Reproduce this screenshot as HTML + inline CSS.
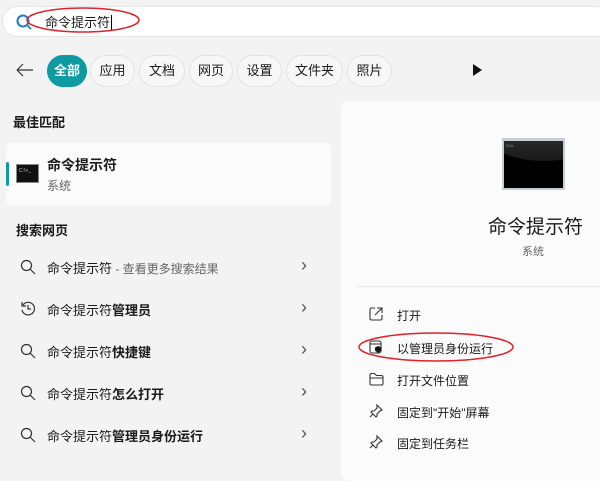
<!DOCTYPE html>
<html><head><meta charset="utf-8"><style>
*{margin:0;padding:0;box-sizing:border-box}
body{width:600px;height:463px;background:#f3f3f3;font-family:"Liberation Sans","Noto Sans CJK SC",sans-serif;position:relative;overflow:hidden;color:#1a1a1a}
.a{position:absolute}
.search{left:2px;top:6px;width:610px;height:31px;background:#fff;border:1px solid #e5e5e5;border-radius:16px}
.chip{top:55px;height:32px;border:1px solid #e3e3e3;border-radius:16px;background:#f7f7f7;font-size:13px;line-height:30px;text-align:center}
.h{font-size:13px;font-weight:bold}
.row{left:0;width:340px;height:40px;font-size:13px}
.row .t{position:absolute;left:47px;top:10px}
.row .chev{position:absolute;left:301px;top:7px;font-size:18px;color:#555}
.act{left:397px;font-size:12px}
</style></head><body>
<div class="a search"></div>
<svg class="a" style="left:15px;top:13px" width="18" height="18" viewBox="0 0 18 18"><circle cx="8" cy="8" r="5.5" fill="none" stroke="#1e7ad6" stroke-width="2"/><path d="M12 12l4 4" stroke="#1aa39a" stroke-width="2"/></svg>
<div class="a" style="left:45px;top:12px;font-size:13px">命令提示符<span style="border-left:1px solid #000;margin-left:1px"></span></div>
<svg class="a" style="left:25px;top:5px" width="118" height="30"><ellipse cx="58" cy="15" rx="56" ry="12" fill="none" stroke="#e0202a" stroke-width="1.5"/></svg>
<svg class="a" style="left:15px;top:62px" width="20" height="16"><path d="M2 8h16M2 8l6-6M2 8l6 6" fill="none" stroke="#333" stroke-width="1.2"/></svg>
<div class="a chip" style="left:47px;width:40px;background:#0e9aa2;border-color:#0e9aa2;color:#fff;font-weight:bold">全部</div>
<div class="a chip" style="left:90px;width:45px">应用</div>
<div class="a chip" style="left:139px;width:46px">文档</div>
<div class="a chip" style="left:189px;width:44px">网页</div>
<div class="a chip" style="left:237px;width:45px">设置</div>
<div class="a chip" style="left:286px;width:57px">文件夹</div>
<div class="a chip" style="left:347px;width:45px">照片</div>
<svg class="a" style="left:472px;top:63px" width="12" height="14"><path d="M1 1l9 6-9 6z" fill="#111"/></svg>
<div class="a h" style="left:13px;top:112px">最佳匹配</div>
<div class="a" style="left:6px;top:143px;width:325px;height:62px;background:#fbfbfb;border-radius:5px"></div>
<div class="a" style="left:6px;top:162px;width:3px;height:24px;background:#0e9aa2;border-radius:2px"></div>
<div class="a" style="left:16px;top:164px;width:23px;height:19px;background:#111;border:1px solid #888"><div style="color:#ccc;font-size:5px;margin:3px 0 0 2px">C:\&gt;_</div></div>
<div class="a h" style="left:47px;top:155px;font-size:14px">命令提示符</div>
<div class="a" style="left:47px;top:177px;font-size:12px;color:#666">系统</div>
<div class="a h" style="left:16px;top:220px">搜索网页</div>
<div class="a row" style="top:248px"><svg class="a" style="left:20px;top:11px" width="16" height="16"><circle cx="6.5" cy="6.5" r="5" fill="none" stroke="#333" stroke-width="1.2"/><path d="M10 10l5 5" stroke="#333" stroke-width="1.2"/></svg><span class="t">命令提示符<span style="color:#666;font-size:12px"> - 查看更多搜索结果</span></span><span class="chev">›</span></div>
<div class="a row" style="top:290px"><svg class="a" style="left:20px;top:11px" width="16" height="16"><path d="M3 4A6.3 6.3 0 1 1 2 9" fill="none" stroke="#333" stroke-width="1.2"/><path d="M2 1v4h4M8 4v4h3" fill="none" stroke="#333" stroke-width="1.2"/></svg><span class="t">命令提示符<b>管理员</b></span><span class="chev">›</span></div>
<div class="a row" style="top:332px"><svg class="a" style="left:20px;top:11px" width="16" height="16"><circle cx="6.5" cy="6.5" r="5" fill="none" stroke="#333" stroke-width="1.2"/><path d="M10 10l5 5" stroke="#333" stroke-width="1.2"/></svg><span class="t">命令提示符<b>快捷键</b></span><span class="chev">›</span></div>
<div class="a row" style="top:374px"><svg class="a" style="left:20px;top:11px" width="16" height="16"><circle cx="6.5" cy="6.5" r="5" fill="none" stroke="#333" stroke-width="1.2"/><path d="M10 10l5 5" stroke="#333" stroke-width="1.2"/></svg><span class="t">命令提示符<b>怎么打开</b></span><span class="chev">›</span></div>
<div class="a row" style="top:416px"><svg class="a" style="left:20px;top:11px" width="16" height="16"><circle cx="6.5" cy="6.5" r="5" fill="none" stroke="#333" stroke-width="1.2"/><path d="M10 10l5 5" stroke="#333" stroke-width="1.2"/></svg><span class="t">命令提示符<b>管理员身份运行</b></span><span class="chev">›</span></div>
<div class="a" style="left:341px;top:101px;width:270px;height:380px;background:#fbfbfb;border-radius:8px"></div>
<div class="a" style="left:502px;top:138px;width:63px;height:52px;background:#000;border:2px solid #c8ccd4;border-top-width:3px;overflow:hidden"><div style="position:absolute;left:-20px;top:-40px;width:120px;height:60px;border-radius:50%;background:linear-gradient(#444,#1a1a1a)"></div><div style="position:absolute;color:#bbb;font-size:4px;left:2px;top:2px">C:\&gt;</div></div>
<div class="a" style="left:488px;top:212px;font-size:19px">命令提示符</div>
<div class="a" style="left:522px;top:243px;font-size:11px;color:#666">系统</div>
<div class="a" style="left:357px;top:286px;width:260px;height:1px;background:#e6e6e6"></div>
<svg class="a" style="left:369px;top:307px" width="14" height="14"><path d="M6 1H2.5A1.5 1.5 0 0 0 1 2.5v9A1.5 1.5 0 0 0 2.5 13h9a1.5 1.5 0 0 0 1.5-1.5V8M8 1h5v5M13 1L6 8" fill="none" stroke="#333" stroke-width="1.1"/></svg>
<div class="a act" style="top:307px">打开</div>
<svg class="a" style="left:369px;top:340px" width="14" height="14"><rect x="1" y="1" width="11" height="12" rx="2" fill="none" stroke="#333" stroke-width="1.1"/><path d="M1 4h11" stroke="#333"/><path d="M9 6l3.5 1.5v3L9 13l-3-2.5v-3z" fill="#111"/></svg>
<div class="a act" style="top:340px">以管理员身份运行</div>
<svg class="a" style="left:357px;top:331px" width="160" height="32"><ellipse cx="79" cy="16" rx="77" ry="14" fill="none" stroke="#e0202a" stroke-width="1.5"/></svg>
<svg class="a" style="left:369px;top:372px" width="15" height="14"><path d="M1 3a1.5 1.5 0 0 1 1.5-1.5h3l2 2h5A1.5 1.5 0 0 1 14 5v6.5A1.5 1.5 0 0 1 12.5 13h-10A1.5 1.5 0 0 1 1 11.5zM1 6h13" fill="none" stroke="#333" stroke-width="1.1"/></svg>
<div class="a act" style="top:372px">打开文件位置</div>
<svg class="a" style="left:369px;top:404px" width="14" height="14"><path d="M8 1l5 5-2 1-3 3 0 2-1 1-5-5 1-1h2l3-3zM4 10l-3 3" fill="none" stroke="#333" stroke-width="1.1"/></svg>
<div class="a act" style="top:404px">固定到"开始"屏幕</div>
<svg class="a" style="left:369px;top:435px" width="14" height="14"><path d="M8 1l5 5-2 1-3 3 0 2-1 1-5-5 1-1h2l3-3zM4 10l-3 3" fill="none" stroke="#333" stroke-width="1.1"/></svg>
<div class="a act" style="top:435px">固定到任务栏</div>
</body></html>
